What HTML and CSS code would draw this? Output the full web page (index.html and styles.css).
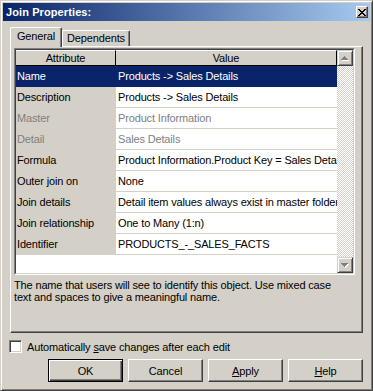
FILE: index.html
```html
<!DOCTYPE html>
<html lang="en">
<head>
  <meta charset="UTF-8" />
  <title>Join Properties</title>
  <link rel="stylesheet" href="styles.css">
</head>
<body>
  <div class="window">
    <div class="titlebar">
      <span class="title">Join Properties:</span>
      <button class="close" aria-label="Close">
        <svg width="8" height="7" viewBox="0 0 8 7">
          <path d="M0 0h2v1h-2zM6 0h2v1h-2zM1 1h2v1h-2zM5 1h2v1h-2zM2 2h4v1h-4zM3 3h2v1h-2zM2 4h4v1h-4zM1 5h2v1h-2zM5 5h2v1h-2zM0 6h2v1h-2zM6 6h2v1h-2z" fill="#000"/>
        </svg>
      </button>
    </div>

    <div class="content">
      <div class="tabs">
        <div class="tab active">General</div>
        <div class="tab">Dependents</div>
      </div>

      <div class="panel">
        <div class="grid">
          <div class="grid-inner">
            <div class="rows">
              <div class="head">
                <div class="h-attr">Attribute</div>
                <div class="h-val">Value</div>
              </div>
              <div class="row sel"><div class="attr">Name</div><div class="val">Products -&gt; Sales Details</div></div>
              <div class="row"><div class="attr">Description</div><div class="val">Products -&gt; Sales Details</div></div>
              <div class="row off"><div class="attr">Master</div><div class="val">Product Information</div></div>
              <div class="row off"><div class="attr">Detail</div><div class="val">Sales Details</div></div>
              <div class="row"><div class="attr">Formula</div><div class="val">Product Information.Product Key = Sales Details.Product Key</div></div>
              <div class="row"><div class="attr">Outer join on</div><div class="val">None</div></div>
              <div class="row"><div class="attr">Join details</div><div class="val">Detail item values always exist in master folder</div></div>
              <div class="row"><div class="attr">Join relationship</div><div class="val">One to Many (1:n)</div></div>
              <div class="row"><div class="attr">Identifier</div><div class="val">PRODUCTS_-_SALES_FACTS</div></div>
            </div>
            <div class="scroll">
              <div class="sb-btn">
                <svg width="8" height="5" viewBox="0 0 8 5">
                  <path d="M4 1h1v1h-1zM3 2h3v1h-3zM2 3h5v1h-5zM1 4h7v1h-7z" fill="#fff"/>
                  <path d="M3 0h1v1h-1zM2 1h3v1h-3zM1 2h5v1h-5zM0 3h7v1h-7z" fill="#808080"/>
                </svg>
              </div>
              <div class="sb-track"></div>
              <div class="sb-btn">
                <svg width="8" height="5" viewBox="0 0 8 5">
                  <path d="M1 1h7v1h-7zM2 2h5v1h-5zM3 3h3v1h-3zM4 4h1v1h-1z" fill="#fff"/>
                  <path d="M0 0h7v1h-7zM1 1h5v1h-5zM2 2h3v1h-3zM3 3h1v1h-1z" fill="#808080"/>
                </svg>
              </div>
            </div>
          </div>
        </div>
        <p class="hint">The name that users will see to identify this object. Use mixed case text and spaces to give a meaningful name.</p>
      </div>

      <label class="check">
        <span class="box"></span>
        <span>Automatically <u>s</u>ave changes after each edit</span>
      </label>

      <div class="buttons">
        <button class="btn default">OK</button>
        <button class="btn">Cancel</button>
        <button class="btn"><u>A</u>pply</button>
        <button class="btn"><u>H</u>elp</button>
      </div>
    </div>
  </div>
</body>
</html>
```

FILE: styles.css
```css
* {
  box-sizing: border-box;
}

body {
  margin: 0;
  font-family: "Liberation Sans", Arial, sans-serif;
  font-size: 11px;
  letter-spacing: -0.15px;
  color: #000;
  background: #d4d0c8;
}

.window {
  width: 373px;
  height: 391px;
  padding: 2px;
  background: #d4d0c8;
  border: 1px solid;
  border-color: #d4d0c8 #404040 #404040 #d4d0c8;
  box-shadow: inset 1px 1px #fff, inset -1px -1px #808080;
}

/* title bar */
.titlebar {
  height: 18px;
  display: flex;
  align-items: center;
  justify-content: space-between;
  padding: 0 2px 0 3px;
  background: linear-gradient(to right, #0a246a, #a6caf0);
}

.title {
  color: #fff;
  font-weight: bold;
  letter-spacing: 0.1px;
}

.close {
  width: 12px;
  height: 12px;
  padding: 0;
  display: flex;
  align-items: center;
  justify-content: center;
  background: #d4d0c8;
  border: 1px solid;
  border-color: #fff #404040 #404040 #fff;
  box-shadow: inset -1px -1px #808080;
}

.content {
  padding: 6px 7px 0;
}

/* tabs */
.tabs {
  display: flex;
  align-items: flex-end;
  height: 19px;
}

.tab {
  height: 16px;
  width: 68px;
  text-align: center;
  line-height: 15px;
  border: 1px solid;
  border-bottom: none;
  border-color: #fff #404040 #fff #fff;
  border-radius: 2px 2px 0 0;
  box-shadow: inset -1px 0 #808080;
}

.tab.active {
  position: relative;
  z-index: 1;
  width: 52px;
  height: 20px;
  margin-bottom: -1px;
  line-height: 17px;
  background: #d4d0c8;
}

.panel {
  height: 287px;
  padding: 1px 3px;
  border: 1px solid;
  border-color: #fff #404040 #404040 #fff;
  box-shadow: inset -1px -1px #808080;
}

/* property grid */
.grid {
  width: 341px;
  height: 227px;
  border: 1px solid;
  border-color: #808080 #fff #fff #808080;
}

.grid-inner {
  height: 100%;
  display: flex;
  background: #fff;
  border: 1px solid;
  border-color: #404040 #d4d0c8 #d4d0c8 #404040;
}

.rows {
  width: 321px;
  overflow: hidden;
}

.head {
  display: flex;
  height: 16px;
  background: #d4d0c8;
}

.head div {
  text-align: center;
  line-height: 14px;
  border-top: 1px solid #fff;
  border-right: 1px solid #000;
  border-bottom: 1px solid #000;
}

.h-attr {
  width: 100px;
}

.h-val {
  width: 221px;
}

.row {
  display: flex;
  height: 21px;
  white-space: nowrap;
}

.attr {
  width: 100px;
  padding-left: 1px;
  line-height: 21px;
  background: #d4d0c8;
  overflow: hidden;
}

.val {
  width: 221px;
  padding-left: 2px;
  line-height: 20px;
  border-bottom: 1px solid #d4d0c8;
  overflow: hidden;
}

.row.sel .attr,
.row.sel .val {
  background: #0a246a;
  color: #fff;
  border-bottom-color: #0a246a;
}

.row.off {
  color: #808080;
}

.scroll {
  width: 16px;
  display: flex;
  flex-direction: column;
}

.sb-btn {
  height: 16px;
  display: flex;
  align-items: center;
  justify-content: center;
  background: #d4d0c8;
  border: 1px solid;
  border-color: #d4d0c8 #404040 #404040 #d4d0c8;
  box-shadow: inset 1px 1px #fff, inset -1px -1px #808080;
}

.sb-track {
  flex: 1;
  background: repeating-conic-gradient(#fff 0 25%, #d4d0c8 0 50%) 0 0 / 2px 2px;
}

.hint {
  width: 330px;
  margin: 4px 0 0;
  line-height: 12px;
}

/* bottom */
.check {
  display: flex;
  align-items: center;
  gap: 5px;
  margin: 7px 0 0 -1px;
  height: 13px;
}

.box {
  width: 13px;
  height: 13px;
  background: #fff;
  border: 1px solid;
  border-color: #808080 #fff #fff #808080;
  box-shadow: inset 1px 1px #404040, inset -1px -1px #d4d0c8;
}

.buttons {
  display: flex;
  justify-content: flex-end;
  gap: 5px;
  margin-top: 6px;
}

.btn {
  width: 75px;
  height: 23px;
  padding: 0;
  font: inherit;
  letter-spacing: inherit;
  color: #000;
  background: #d4d0c8;
  border: 1px solid;
  border-color: #fff #404040 #404040 #fff;
  box-shadow: inset -1px -1px #808080;
}

.btn.default {
  border-color: #000;
  box-shadow: inset 1px 1px #fff, inset -1px -1px #404040, inset -2px -2px #808080;
}
```
